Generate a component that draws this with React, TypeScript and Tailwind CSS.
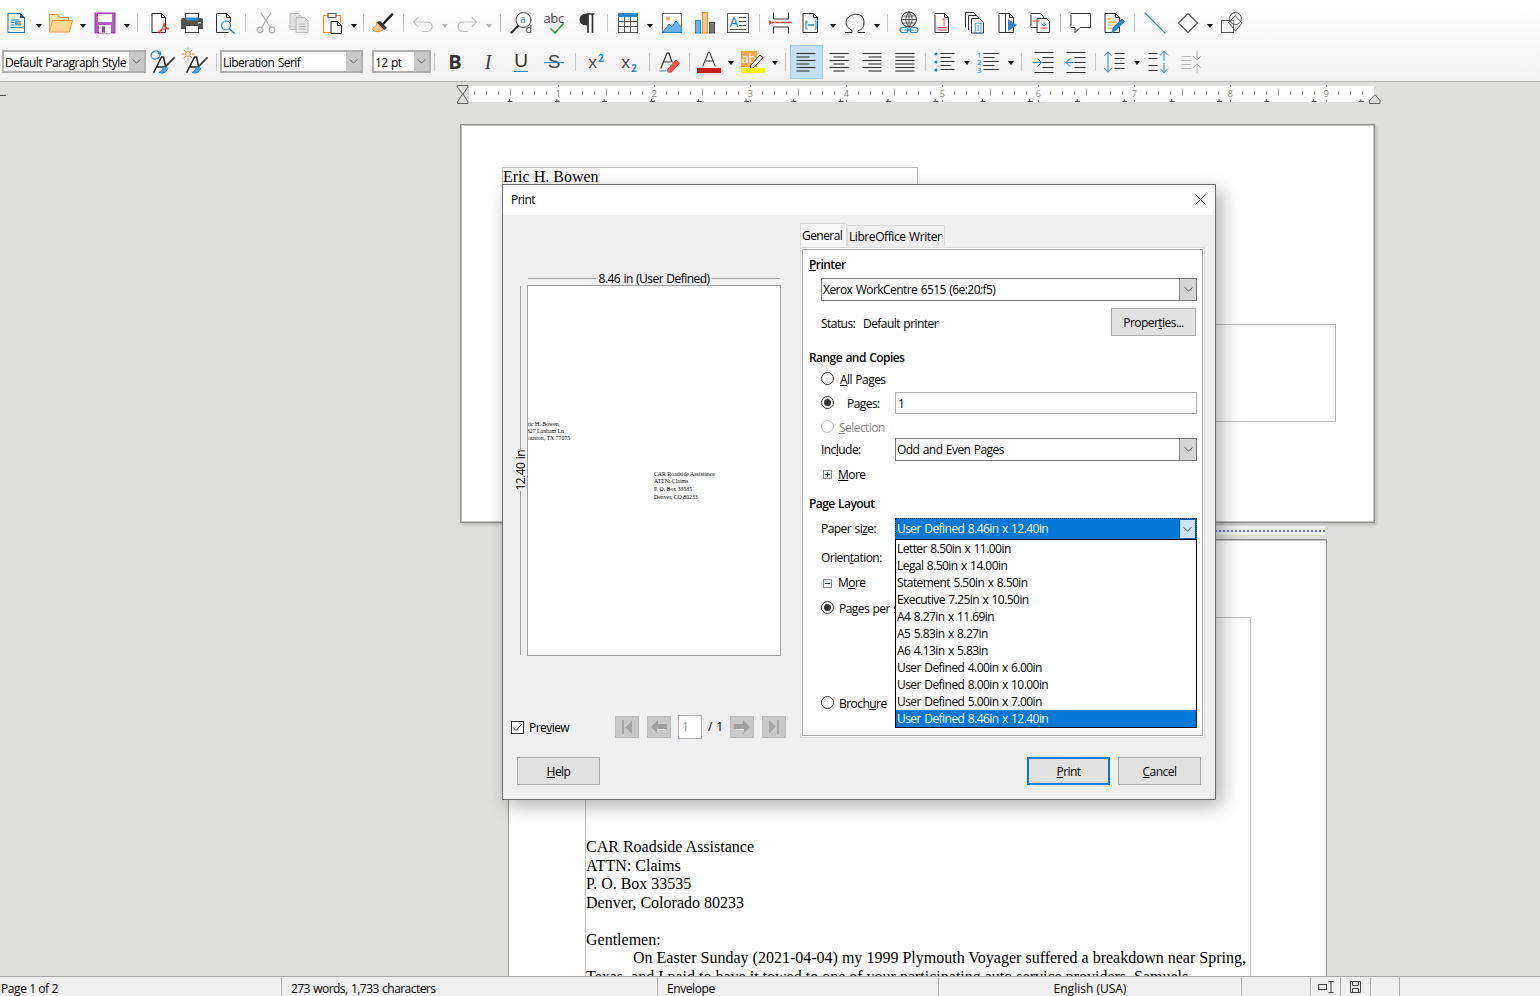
import React from "react";

const Ico = ({ children }: { children: React.ReactNode }) => (
  <svg viewBox="0 0 24 24" className="w-6 h-6 overflow-visible" fill="none" strokeWidth={1} stroke="#333" strokeLinecap="square">
    {children}
  </svg>
);
const I = ({ children, active, cls }: { children: React.ReactNode; active?: boolean; cls?: string }) => (
  <div className={"w-[33px] h-[34px] shrink-0 flex items-center justify-center " + (active ? "bg-[#c5dff5] border border-[#9ccaf0] " : "") + (cls || "")}>
    {children}
  </div>
);
const Caret = ({ dim }: { dim?: boolean }) => (
  <div className="w-[11px] shrink-0 flex items-center justify-center pt-[3px]">
    <div className={"w-0 h-0 border-l-[3.5px] border-r-[3.5px] border-t-[4px] border-l-transparent border-r-transparent " + (dim ? "border-t-[#b5b5b5]" : "border-t-[#111]")} />
  </div>
);
const Sep = ({ w }: { w: string }) => (
  <div className={w + " shrink-0 flex justify-center"}>
    <div className="w-px h-[18px] bg-[#c8c8c8]" />
  </div>
);
const Chev = ({ c = "#444" }: { c?: string }) => (
  <svg viewBox="0 0 10 6" className="w-[9px] h-[5px]" fill="none" stroke={c} strokeWidth={1}>
    <path d="M0.5 0.5 5 5 9.5 0.5" />
  </svg>
);

const DocShape = ({ s = "#333" }: { s?: string }) => <path d="M5.5 2.5h9l4 4v15h-13z M14.5 2.5v4h4" stroke={s} fill="#fff" />;

const StyleA = () => (
  <>
    <path d="M3 22L10.500 7h2l2 9M6.500 17H14" stroke="#222" strokeWidth={1.500} />
    <path d="M13 18L23 8" stroke="#333" strokeWidth={1.600} />
    <path d="M13 16.500q-1 4-5 6 4 1.500 6.500-.5l2-3z" fill="#4c9fe0" stroke="#2b86c9" />
  </>
);

const icons = {
  newdoc: (
    <Ico>
      <path d="M3.5 2.5h12l4 4v15h-16z" stroke="#1b72b8" fill="#fff" />
      <path d="M15 2l5 5h-5z" fill="#1b5c94" stroke="none" />
      <path d="M6 9h8M6 11.5h3M6 14h3M6 16.5h11" stroke="#1b72b8" />
      <rect x="10" y="10" width="6" height="4.5" fill="#5ea3dc" stroke="none" />
      <rect x="13" y="11" width="3" height="2" fill="#f29d48" stroke="none" />
    </Ico>
  ),
  open: (
    <Ico>
      <path d="M0.5 20.5v-17h8l2 3h9v3" stroke="#f7953b" fill="#fde3ac" />
      <path d="M0.5 20.5l3-11h20l-3 11z" stroke="#f7953b" fill="#fdd58e" />
    </Ico>
  ),
  save: (
    <Ico>
      <rect x="2" y="2" width="20" height="20" fill="#b05cbe" stroke="#9a3fa9" />
      <rect x="5" y="3" width="14" height="8" fill="#fff" stroke="none" />
      <rect x="6" y="14" width="12" height="8" fill="#fff" stroke="none" />
      <rect x="9" y="15.5" width="3" height="6" fill="#9a3fa9" stroke="none" />
    </Ico>
  ),
  pdf: (
    <Ico>
      <DocShape s="#222" />
      <path d="M13 22l3-6 1-4 1 4 4 2h-7l-4 3" stroke="#e8453c" strokeWidth={1.2} fill="none" />
    </Ico>
  ),
  print: (
    <Ico>
      <rect x="5.5" y="2.5" width="13" height="6" fill="#fff" stroke="#444" />
      <path d="M1 9q0-2 2-2h18q2 0 2 2v9h-22z" fill="#555" stroke="none" />
      <rect x="6" y="6.5" width="12" height="3" fill="#2f8fd6" stroke="none" />
      <rect x="5.5" y="14.5" width="13" height="7" fill="#fff" stroke="#444" />
      <rect x="18" y="11" width="3" height="1.5" fill="#fff" stroke="none" />
    </Ico>
  ),
  preview: (
    <Ico>
      <path d="M15 21.5H3.5v-19h10l4 4v4" stroke="#333" />
      <path d="M13.5 2.5v4h4" stroke="#333" />
      <circle cx="13" cy="14.5" r="4.5" stroke="#2b8ad0" fill="#fff" strokeWidth={1.2} />
      <path d="M16.5 18l4.5 4" stroke="#2b8ad0" strokeWidth={1.5} />
    </Ico>
  ),
  cut: (
    <Ico>
      <g stroke="#b3b3b3" strokeWidth={1.3}>
        <circle cx="6" cy="19" r="2.8" />
        <circle cx="18" cy="19" r="2.8" />
        <path d="M7.5 16.5L17 2M16.5 16.5L7 2" />
      </g>
    </Ico>
  ),
  copy: (
    <Ico>
      <g stroke="#b8b8b8">
        <path d="M3.5 2.5h8l3 3v13h-11z" fill="#ddd" />
        <path d="M9.5 6.5h8l3.5 3.5v11.5h-11.5z" fill="#e6e6e6" />
        <path d="M12 13h6M12 15.5h6M12 18h6" />
      </g>
    </Ico>
  ),
  paste: (
    <Ico>
      <path d="M8 4.5H3.5v17h7M16 4.5h4.500v6" stroke="#f0902f" strokeWidth={1.2} />
      <rect x="8" y="2.5" width="8" height="4" fill="#fff" stroke="#555" />
      <path d="M11.500 10.500h6l4 4v8h-10z M17.500 10.500v4h4" stroke="#222" fill="#fff" />
    </Ico>
  ),
  brush: (
    <Ico>
      <path d="M12 13L21 3.500" stroke="#222" strokeWidth={2.5} />
      <path d="M9 10l7 7-3 2-8-8z" fill="#333" stroke="none" />
      <path d="M6 12l6 7q-4 3-9 1-2-1-1-3 3 0 4-5z" fill="#fbc98d" stroke="#f0902f" />
    </Ico>
  ),
  undo: (
    <Ico>
      <path d="M7 6.500L2.500 11 7 15.500M2.500 11h13q5.500 0 5.500 4.500t-5.500 5h-4" stroke="#c4c4c4" strokeWidth={1.1} />
    </Ico>
  ),
  redo: (
    <Ico>
      <path d="M17 6.500l4.500 4.500-4.500 4.500M21.500 11h-13q-5.500 0-5.500 4.500t5.500 5h4" stroke="#c4c4c4" strokeWidth={1.1} />
    </Ico>
  ),
  find: (
    <Ico>
      <circle cx="13.500" cy="9" r="7.500" stroke="#444" fill="#fff" />
      <text x="10.300" y="12" fontSize="10" fill="#2b86c9" stroke="none" fontFamily="Open Sans">a</text>
      <path d="M8 15L1.500 21.500" stroke="#333" strokeWidth={2} />
      <text x="15.500" y="22" fontSize="11" fill="#333" stroke="none" fontFamily="Open Sans">d</text>
    </Ico>
  ),
  spell: (
    <Ico>
      <text x="0.500" y="12" fontSize="13" fill="#444" stroke="none" fontFamily="Open Sans" letterSpacing="-0.4">abc</text>
      <path d="M8 18l4 4 8-9" stroke="#35a24a" strokeWidth={1.6} />
    </Ico>
  ),
  pil: (
    <Ico>
      <path d="M11 3q-7 0-7 5.500t7 5.500z" fill="#333" stroke="#333" />
      <path d="M11.500 3h6M12 3v18M16.500 3v18" stroke="#333" strokeWidth={1.7} />
    </Ico>
  ),
  table: (
    <Ico>
      <rect x="2.500" y="2.500" width="19" height="19" fill="#fff" stroke="#555" />
      <rect x="2" y="2" width="20" height="4" fill="#2b86c9" stroke="none" />
      <path d="M2.500 10.500h19M2.500 15.500h19M8.500 6v15.500M14.500 6v15.500" stroke="#555" />
    </Ico>
  ),
  image: (
    <Ico>
      <rect x="2.500" y="2.500" width="19" height="19" fill="#fff" stroke="#666" />
      <circle cx="8" cy="7.500" r="2" fill="#f7a64b" stroke="none" />
      <path d="M3 21l6-8 3 3 4-6 5.500 6.500V21z" fill="#6cb2ea" stroke="#2b86c9" />
    </Ico>
  ),
  chart: (
    <Ico>
      <rect x="2.500" y="9.500" width="5" height="12.500" fill="#6cb2ea" stroke="#2b86c9" />
      <rect x="9.500" y="1.500" width="5" height="20.500" fill="#fbc98d" stroke="#f0902f" />
      <rect x="16.500" y="11.500" width="5" height="10.500" fill="#777" stroke="#555" />
    </Ico>
  ),
  textbox: (
    <Ico>
      <rect x="1.500" y="2.500" width="21" height="19" fill="#fff" stroke="#555" />
      <text x="3.500" y="16" fontSize="14" fill="#2b86c9" stroke="none" fontFamily="Open Sans">A</text>
      <path d="M13.500 6.500h6M13.500 10.500h6M13.500 14.500h6M4.500 18.500h15" stroke="#555" />
    </Ico>
  ),
  brk: (
    <Ico>
      <path d="M4.500 2v6h15V2M4.500 22v-6h15v6" stroke="#333" />
      <path d="M2 11.500h3M7 11.500h3M12 11.500h3M17 11.500h5" stroke="#e8453c" strokeWidth={1.3} />
      <path d="M0 9l4 2.500L0 14z" fill="#e8453c" stroke="none" />
    </Ico>
  ),
  field: (
    <Ico>
      <path d="M4.500 2.500h10l4 4v15h-14z M14.500 2.500v4h4" stroke="#333" fill="#fff" />
      <path d="M8 12v-2h-1v8h1M16 10h1v8h-1" stroke="#2b86c9" />
      <path d="M9.500 14h5" stroke="#2b86c9" strokeWidth={1.500} />
    </Ico>
  ),
  omega: (
    <Ico>
      <path d="M2.500 21.500h6.500v-2Q3 16.500 3 11t9-8q9 0 9 8t-6 8.500v2h6.500" stroke="#333" />
    </Ico>
  ),
  link: (
    <Ico>
      <circle cx="12" cy="8.500" r="7.500" stroke="#333" />
      <path d="M12 1v15M4.500 8.500h15M5.500 5h13M5.500 12h13M12 1q-7 7.500 0 15M12 1q7 7.500 0 15" stroke="#333" strokeWidth={0.8} />
      <rect x="3" y="16.500" width="8" height="5" rx="2.500" stroke="#2b86c9" fill="#fff" strokeWidth={1.2} />
      <rect x="13" y="16.500" width="8" height="5" rx="2.500" stroke="#2b86c9" fill="#fff" strokeWidth={1.2} />
      <path d="M8 19h8" stroke="#2b86c9" strokeWidth={1.2} />
    </Ico>
  ),
  foot: (
    <Ico>
      <DocShape s="#333" />
      <path d="M8 16.500h8M8 19h8" stroke="#e8453c" />
      <text x="11" y="14.500" fontSize="10" fill="#e8453c" stroke="none" fontFamily="Open Sans">1</text>
    </Ico>
  ),
  end: (
    <Ico>
      <path d="M2.500 16V1.500h8l2 2M5.500 18.500V4.500h8l3 3" stroke="#333" />
      <path d="M8.500 21.500v-14h8l4 4v10z" stroke="#333" fill="#fff" />
      <text x="11" y="20" fontSize="10" fill="#2b86c9" stroke="none" fontFamily="Open Sans">[i]</text>
    </Ico>
  ),
  mark: (
    <Ico>
      <path d="M3.500 2.500h10l4 4v15h-14z M13.500 2.500v4h4" stroke="#333" fill="#fff" />
      <path d="M9.500 2.500v19" stroke="#333" />
      <path d="M12 8l9 6-9 6z" fill="#2b86c9" stroke="none" />
    </Ico>
  ),
  xref: (
    <Ico>
      <path d="M2.500 2.500h9l3 3v11h-12z" stroke="#333" fill="#fff" />
      <path d="M8.500 7.500h9l3 3v11h-12z" stroke="#333" fill="#fff" />
      <path d="M4 10h6M12 17h6" stroke="#e8453c" />
      <path d="M15 11v4M13 13l2 2 2-2" stroke="#2b86c9" />
    </Ico>
  ),
  comment: (
    <Ico>
      <path d="M2.500 2.500h19v14H11l-5 5v-5H2.500z" stroke="#333" fill="#fff" />
    </Ico>
  ),
  track: (
    <Ico>
      <path d="M3.500 2.500h10l4 4v15h-14z M13.500 2.500v4h4" stroke="#333" fill="#fff" />
      <path d="M6 8h3M6 11h8M6 14h6M6 17h4" stroke="#f0902f" />
      <path d="M10 21l1-4 9-9 2.500 2.500-9 9z" fill="#2b86c9" stroke="#2b86c9" />
    </Ico>
  ),
  line: (
    <Ico>
      <path d="M2 2l20 20" stroke="#2b86c9" strokeWidth={1.2} />
    </Ico>
  ),
  diamond: (
    <Ico>
      <path d="M12 2.500L21.500 12 12 21.500 2.500 12z" stroke="#555" strokeWidth={1.1} />
    </Ico>
  ),
  shapes: (
    <Ico>
      <rect x="1.500" y="9.500" width="12" height="12" stroke="#555" />
      <circle cx="15.500" cy="7.500" r="6" stroke="#555" fill="#fff" fillOpacity="0.4" />
      <path d="M15.500 5l6.500 7-6.500 8-6.500-8z" stroke="#555" />
    </Ico>
  ),
  sUpd: (
    <Ico>
      <path d="M0 6a5 5 0 0 1 8-4M9 5a5 5 0 0 1-8 3" stroke="#2b86c9" strokeWidth={1.3} />
      <path d="M6.500 4l3-3 1 4z" fill="#2b86c9" stroke="none" />
      <StyleA />
    </Ico>
  ),
  sNew: (
    <Ico>
      <circle cx="4" cy="4" r="2.500" stroke="#f0902f" />
      <path d="M4 -2v2M4 8v2M-2 4h2M8 4h2M0 0l1.500 1.500M8 0L6.500 1.500M0 8l1.500-1.500M8 8L6.500 6.500" stroke="#f0902f" />
      <StyleA />
    </Ico>
  ),
  clear: (
    <Ico>
      <path d="M4 18L10 3h2l3 9M7 12h6" stroke="#333" strokeWidth={1.2} />
      <path d="M3 21h6" stroke="#2b86c9" />
      <path d="M11 19l8-9 3.500 3-8 9h-3z" fill="#ef5350" stroke="#d93a36" />
    </Ico>
  ),
  fcolor: (
    <Ico>
      <path d="M6 16L11.500 2h1L18 16M8 11h8" stroke="#333" />
      <rect x="0" y="18" width="24" height="5" fill="#c9211e" stroke="none" />
    </Ico>
  ),
  hl: (
    <Ico>
      <rect x="0" y="1" width="16" height="16" fill="#f7a64b" stroke="none" />
      <text x="0.500" y="13" fontSize="13" fill="#fff" stroke="none" fontFamily="Open Sans">ab</text>
      <path d="M10 15l9-10 3 2.500-9 10-3 1z" fill="#fff" stroke="#333" />
      <rect x="0" y="18" width="24" height="5" fill="#ffff00" stroke="none" />
    </Ico>
  ),
};

const lines = (xs: [number, number][]) => (
  <Ico>
    {xs.map((l, i) => (
      <path key={i} d={`M${l[0]} ${3.5 + i * 3.5}H${l[1]}`} stroke="#333" strokeWidth={1.1} />
    ))}
  </Ico>
);
const alignL = lines([[3, 21], [3, 15], [3, 21], [3, 15], [3, 21], [3, 15]]);
const alignC = lines([[3, 21], [7, 17], [3, 21], [7, 17], [3, 21], [7, 17]]);
const alignR = lines([[3, 21], [9, 21], [3, 21], [9, 21], [3, 21], [9, 21]]);
const alignJ = lines([[3, 21], [3, 21], [3, 21], [3, 21], [3, 21], [3, 21]]);

const bullets = (
  <Ico>
    <circle cx="3" cy="4" r="1.600" fill="#2b86c9" stroke="none" />
    <circle cx="3" cy="12" r="1.600" fill="#2b86c9" stroke="none" />
    <circle cx="3" cy="20" r="1.600" fill="#2b86c9" stroke="none" />
    <path d="M8 3.500h13M8 7.500h9M8 11.500h13M8 15.500h9M8 19.500h13" stroke="#333" />
  </Ico>
);
const numbering = (
  <Ico>
    <text x="0" y="7.500" fontSize="8" fill="#2b86c9" stroke="none" fontFamily="Open Sans">1</text>
    <text x="0" y="15" fontSize="8" fill="#2b86c9" stroke="none" fontFamily="Open Sans">2</text>
    <text x="0" y="22.500" fontSize="8" fill="#2b86c9" stroke="none" fontFamily="Open Sans">3</text>
    <path d="M7 3.500h14M7 7.500h10M7 11.500h14M7 15.500h10M7 19.500h14" stroke="#333" />
  </Ico>
);
const indent = (
  <Ico>
    <path d="M4 2.500h18M12 7.500h10M12 12.500h10M12 17.500h10M4 22.500h18" stroke="#333" />
    <path d="M2 12.500h8M7 9l3.500 3.500L7 16" stroke="#2b86c9" />
  </Ico>
);
const outdent = (
  <Ico>
    <path d="M3 2.500h18M11 7.500h10M11 12.500h10M11 17.500h10M3 22.500h18" stroke="#333" />
    <path d="M2 12.500h7M5.500 9L2 12.500 5.500 16" stroke="#2b86c9" />
  </Ico>
);
const spacing = (
  <Ico>
    <path d="M5 2v20M1.500 5.500L5 2l3.500 3.500M1.500 18.500L5 22l3.500-3.500" stroke="#2b86c9" />
    <path d="M12 3.500h9M12 8.500h9M12 13.500h9M12 18.500h9" stroke="#333" />
  </Ico>
);
const incr = (
  <Ico>
    <path d="M2 3.500h8M2 8.500h8M2 15.500h8M2 20.500h8" stroke="#333" />
    <path d="M17 1.500v9M13.500 5L17 1.500 20.500 5M17 13v9.500M13.500 19L17 22.500 20.500 19" stroke="#2b86c9" />
  </Ico>
);
const decr = (
  <Ico>
    <path d="M2 6.500h9M2 10.500h9M2 14.500h9M2 18.500h9" stroke="#b8b8b8" />
    <path d="M17 1v9M13.500 6.500L17 10l3.500-3.500M17 23v-9M13.500 17.500L17 14l3.500 3.500" stroke="#b8b8b8" />
  </Ico>
);

const Combo = ({ w, text, cls = "", textCls = "" }: { w: string; text: string; cls?: string; textCls?: string }) => (
  <div className={`${w} h-[23px] ${cls} shrink-0 flex border-2 border-[#b0b0b0] bg-white`}>
    <div className={"flex-1 min-w-0 pl-[1px] whitespace-nowrap overflow-hidden leading-[21px] " + textCls}>{text}</div>
    <div className="w-[15px] bg-[#c8c8c8] flex items-center justify-center">
      <Chev />
    </div>
  </div>
);

const DlgCombo = ({ text, w }: { text: string; w: string }) => (
  <div className={w + " h-[23px] shrink-0 flex border border-[#7a7a7a] bg-white"}>
    <div className="flex-1 pl-[1px] leading-[21px] whitespace-nowrap">{text}</div>
    <div className="w-[17px] bg-[#d4d4d4] border-l border-[#8a8a8a] flex items-center justify-center">
      <Chev />
    </div>
  </div>
);

const Radio = ({ on, dim }: { on?: boolean; dim?: boolean }) => (
  <div className={"w-[13px] h-[13px] rounded-full border bg-white shrink-0 flex items-center justify-center -mt-px " + (dim ? "border-[#c4c4c4]" : "border-[#333]")}>
    {on && <div className="w-[7px] h-[7px] rounded-full bg-[#333]" />}
  </div>
);

const Plus = ({ minus }: { minus?: boolean }) => (
  <div className="w-[9px] h-[9px] border border-[#8a8a8a] bg-white shrink-0 flex items-center justify-center relative">
    <div className="w-[5px] h-px bg-[#223a6b]" />
    {!minus && <div className="absolute w-px h-[5px] bg-[#223a6b]" />}
  </div>
);

const Btn = ({ children, cls = "border border-[#adadad]" }: { children: React.ReactNode; cls?: string }) => (
  <div className={"w-[83px] h-[28px] bg-[#e1e1e1] flex items-center justify-center shrink-0 pt-[2px] " + cls}>{children}</div>
);

const Nav = ({ children }: { children: React.ReactNode }) => (
  <div className="w-[24px] h-[22px] bg-[#c8c8c8] border border-[#bdbdbd] shrink-0 flex items-center justify-center">{children}</div>
);

const papers = [
  "Letter 8.50in x 11.00in",
  "Legal 8.50in x 14.00in",
  "Statement 5.50in x 8.50in",
  "Executive 7.25in x 10.50in",
  "A4 8.27in x 11.69in",
  "A5 5.83in x 8.27in",
  "A6 4.13in x 5.83in",
  "User Defined 4.00in x 6.00in",
  "User Defined 8.00in x 10.00in",
  "User Defined 5.00in x 7.00in",
  "User Defined 8.46in x 12.40in",
];

const Ruler = () => {
  const marks: React.ReactNode[] = [];
  for (let k = 0; k < 75; k++) {
    const x = 5 + k * 12;
    if (k % 8 === 7) continue;
    const major = k % 8 === 3;
    marks.push(<rect key={k} x={x} y={major ? 4 : 6.5} width="1" height={major ? 7 : 3} fill={major ? "#a0a0a0" : "#9a9a9a"} />);
  }
  const nums = [1, 2, 3, 4, 5, 6, 7, 8, 9];
  const tabs = Array.from({ length: 19 }, (_, i) => 40.5 + i * 47.3);
  return (
    <svg width="905" height="19" viewBox="0 0 905 19" className="shrink-0 overflow-visible">
      <rect x="0" y="1" width="905" height="16" fill="#fff" />
      {marks}
      {nums.map((n) => (
        <g key={n}>
          <rect x={89 + (n - 1) * 96} y="0" width="1" height="2" fill="#999" />
          <rect x={89 + (n - 1) * 96} y="15" width="1" height="2" fill="#999" />
          <text x={89 + (n - 1) * 96} y="11.500" textAnchor="middle" fontSize="9" fill="#8a8a8a" fontFamily="Open Sans">{n}</text>
        </g>
      ))}
      {tabs.map((x) => (
        <path key={x} d={`M${x} 14v3M${x - 2} 16.500h5`} stroke="#555" strokeWidth="1" fill="none" />
      ))}
    </svg>
  );
};

export default function App() {
  return (
    <div className="w-[1540px] h-[996px] relative overflow-hidden flex flex-col text-[12px] leading-[16px] tracking-[-0.55px] [word-spacing:0.8px] text-black bg-[#dfdfdd] font-['Open_Sans','Liberation_Sans',sans-serif]">
      {/* toolbars */}
      <div className="h-[82px] shrink-0 bg-linear-to-b from-white to-[#f2f2f2] border-b border-[#b4b4b4] flex flex-col">
        <div className="h-[42px] pt-[6px] flex pl-[0.5px]">
          <I>{icons.newdoc}</I>
          <Caret />
          <I>{icons.open}</I>
          <Caret />
          <I>{icons.save}</I>
          <Caret />
          <Sep w="w-[10px] pt-[8px]" />
          <I>{icons.pdf}</I>
          <I>{icons.print}</I>
          <I>{icons.preview}</I>
          <Sep w="w-[8px] pt-[8px]" />
          <I>{icons.cut}</I>
          <I>{icons.copy}</I>
          <I>{icons.paste}</I>
          <Caret />
          <Sep w="w-[7px] pt-[8px]" />
          <I>{icons.brush}</I>
          <Sep w="w-[7px] pt-[8px]" />
          <I>{icons.undo}</I>
          <Caret dim />
          <I>{icons.redo}</I>
          <Caret dim />
          <Sep w="w-[11px] pt-[8px]" />
          <I>{icons.find}</I>
          <I>{icons.spell}</I>
          <I>{icons.pil}</I>
          <Sep w="w-[6.5px] pt-[8px]" />
          <I>{icons.table}</I>
          <Caret />
          <I>{icons.image}</I>
          <I>{icons.chart}</I>
          <I>{icons.textbox}</I>
          <Sep w="w-[10px] pt-[8px]" />
          <I>{icons.brk}</I>
          <I cls="ml-[-3px]">{icons.field}</I>
          <Caret />
          <I>{icons.omega}</I>
          <Caret />
          <Sep w="w-[10px] pt-[8px]" />
          <I>{icons.link}</I>
          <I>{icons.foot}</I>
          <I>{icons.end}</I>
          <I>{icons.mark}</I>
          <I>{icons.xref}</I>
          <Sep w="w-[7px] pt-[8px]" />
          <I>{icons.comment}</I>
          <I>{icons.track}</I>
          <Sep w="w-[8px] pt-[8px]" />
          <I>{icons.line}</I>
          <I>{icons.diamond}</I>
          <Caret />
          <I>{icons.shapes}</I>
        </div>
        <div className="h-[39px] flex items-center">
          <Combo w="w-[144px]" cls="ml-[2px]" text="Default Paragraph Style" />
          <div className="w-[0.5px] shrink-0" />
          <I>{icons.sUpd}</I>
          <I>{icons.sNew}</I>
          <Sep w="w-[7.5px]" />
          <Combo w="w-[143px]" text="Liberation Serif" />
          <div className="w-[9px] shrink-0" />
          <Combo w="w-[59px]" text="12 pt" textCls="pl-[1px]" />
          <Sep w="w-[7.5px]" />
          <I><span className="text-[20px] font-bold text-[#333] tracking-normal font-['Open_Sans']">B</span></I>
          <I><span className="text-[20px] italic text-[#444] tracking-normal font-['Liberation_Serif']">I</span></I>
          <I><span className="text-[19px] text-[#333] tracking-normal border-b border-[#2b86c9] leading-[20px] font-['Liberation_Sans']">U</span></I>
          <I>
            <span className="text-[19px] text-[#444] tracking-normal relative leading-[20px] font-['Liberation_Sans']">
              S<span className="absolute left-[-4px] right-[-4px] top-[10px] h-px bg-[#2b86c9]" />
            </span>
          </I>
          <Sep w="w-[9px]" />
          <I>
            <span className="text-[17px] text-[#444] tracking-normal font-['Open_Sans'] flex items-start leading-[20px]">
              x<span className="text-[10px] text-[#2b86c9] font-bold leading-[12px] ml-[1px]">2</span>
            </span>
          </I>
          <I>
            <span className="text-[17px] text-[#444] tracking-normal font-['Open_Sans'] flex items-end leading-[20px]">
              x<span className="text-[10px] text-[#2b86c9] font-bold leading-[12px] ml-[1px] -mb-[2px]">2</span>
            </span>
          </I>
          <Sep w="w-[7px]" />
          <I>{icons.clear}</I>
          <Sep w="w-[7px]" />
          <I>{icons.fcolor}</I>
          <Caret />
          <I>{icons.hl}</I>
          <Caret />
          <Sep w="w-[9px]" />
          <I active>{alignL}</I>
          <I>{alignC}</I>
          <I>{alignR}</I>
          <I>{alignJ}</I>
          <Sep w="w-[7px]" />
          <I>{bullets}</I>
          <Caret />
          <I>{numbering}</I>
          <Caret />
          <Sep w="w-[10px]" />
          <I>{indent}</I>
          <I>{outdent}</I>
          <Sep w="w-[6px]" />
          <I>{spacing}</I>
          <Caret />
          <I>{incr}</I>
          <I>{decr}</I>
        </div>
      </div>

      {/* document area */}
      <div className="flex-1 min-h-0 flex flex-col relative">
        <div className="h-[19px] mt-[3px] flex shrink-0 relative">
          <div className="w-[6px] h-px bg-[#555] mt-[10px]" />
          <svg width="12" height="19" viewBox="0 0 12 19" className="ml-[451px] shrink-0" fill="#dfdfdd" stroke="#666">
            <path d="M0.500 0.500h10.500v1.500L6 9 11 17v1.500H0.500V17L5.500 9 0.500 2z" />
          </svg>
          <Ruler />
          <svg width="12" height="10" viewBox="0 0 12 10" className="mt-[9px] -ml-[5px] shrink-0" fill="#dfdfdd" stroke="#666">
            <path d="M0.500 9.500v-3L6 0.700 11 6.500v3z" />
          </svg>
        </div>

        <div className="ml-[460px] mt-[20px] w-[915px] h-[399px] shrink-0 bg-white border border-[#8f8f8f] shadow-[inset_0_0_0_1px_#c6c6c6,2px_2px_3px_#bdbdbd] flow-root">
          <div className="ml-[41px] mt-[42px] w-[416px] h-[60px] border border-[#bcbcbc] text-[16px] leading-[18px] tracking-normal [word-spacing:normal] font-['Liberation_Serif',serif]">
            Eric H. Bowen
          </div>
          <div className="ml-[440px] mt-[97px] w-[435px] h-[98px] border border-[#bcbcbc]" />
        </div>

        <div className="h-[16px] shrink-0 pt-[3px]">
          <div className="ml-[1000px] w-[325px] h-[9px] bg-[#eeeeee] flex items-center">
            <div className="w-full border-t-2 border-dotted border-[#6a6ad0]" />
          </div>
        </div>

        <div className="ml-[508px] w-[819px] flex-1 min-h-0 overflow-hidden bg-white border-x border-t border-[#8f8f8f] shadow-[inset_0_1px_0_0_#c6c6c6]">
          <div className="ml-[76px] mt-[77px] w-[666px] h-[400px] border-x border-t border-[#c4c4c4] pt-[220px] text-[16px] leading-[18.5px] tracking-normal [word-spacing:normal] font-['Liberation_Serif',serif]">
            <div>CAR Roadside Assistance</div>
            <div>ATTN: Claims</div>
            <div>P. O. Box 33535</div>
            <div>Denver, Colorado 80233</div>
            <div className="h-[18.5px]" />
            <div>Gentlemen:</div>
            <p className="w-[660px] indent-[47px] text-justify">
              On Easter Sunday (2021-04-04) my 1999 Plymouth Voyager suffered a breakdown near Spring, Texas, and I paid to have it towed to one of your participating auto service providers, Samuels
            </p>
          </div>
        </div>
      </div>

      {/* status bar */}
      <div className="h-[20px] shrink-0 bg-[#f0f0f0] border-t border-[#a8a8a8] flex items-center leading-[24px] tracking-[-0.42px] [word-spacing:normal]">
        <div className="w-[282px] pl-[1px] h-full border-r border-[#b0b0b0] whitespace-nowrap shrink-0">Page 1 of 2</div>
        <div className="w-[376px] pl-[9px] h-full border-r border-[#b0b0b0] whitespace-nowrap shrink-0 tracking-[-0.55px] [word-spacing:0.8px]">273 words, 1,733 characters</div>
        <div className="w-[281px] pl-[9px] h-full border-r border-[#b0b0b0] whitespace-nowrap shrink-0">Envelope</div>
        <div className="w-[303px] text-center h-full border-r border-[#b0b0b0] whitespace-nowrap shrink-0 tracking-normal">English (USA)</div>
        <div className="w-[69px] h-full border-r border-[#b0b0b0] shrink-0" />
        <div className="w-[30px] h-full border-r border-[#b0b0b0] shrink-0 flex items-center justify-center">
          <svg width="18" height="12" viewBox="0 0 18 12" fill="none" stroke="#444">
            <rect x="1.500" y="3.500" width="8" height="5" />
            <path d="M11.500 0.500h5M14 0.500v11M11.500 11.500h5" />
          </svg>
        </div>
        <div className="w-[30px] h-full border-r border-[#b0b0b0] shrink-0 flex items-center justify-center">
          <svg width="11" height="12" viewBox="0 0 11 12" fill="none" stroke="#444">
            <path d="M0.500 0.500h10v11h-10z M2.500 0.500v4h6v-4M2.500 11.500v-4h6v4" />
          </svg>
        </div>
        <div className="w-[29px] h-full border-r border-[#b0b0b0] shrink-0" />
      </div>

      {/* print dialog */}
      <div className="absolute left-[502px] top-[184px] w-[714px] h-[616px] bg-[#f0f0f0] border border-[#6e6e6e] shadow-[6px_6px_18px_rgba(0,0,0,0.32)] flex flex-col">
        <div className="h-[30px] shrink-0 bg-white flex items-center justify-between pl-[8px] pr-[9px]">
          <span>Print</span>
          <svg width="11" height="11" viewBox="0 0 11 11" stroke="#111" fill="none" className="-mt-[2px]">
            <path d="M0.500 0.500l10 10M10.500 0.500l-10 10" />
          </svg>
        </div>
        <div className="h-[542px] shrink-0 flex">
          {/* preview */}
          <div className="w-[297px] shrink-0 flex flex-col">
            <div className="ml-[25px] mt-[56px] w-[252px] h-[14px] flex items-center gap-[3px]">
              <div className="flex-1 h-px bg-[#a0a0a0]" />
              <span className="whitespace-nowrap pt-[2px]">8.46 in (User Defined)</span>
              <div className="flex-1 h-px bg-[#a0a0a0]" />
            </div>
            <div className="h-[371px] flex shrink-0">
              <div className="ml-[10px] w-[15px] flex flex-col items-center shrink-0 py-px">
                <div className="flex-1 w-px bg-[#a0a0a0]" />
                <span className="[writing-mode:vertical-rl] rotate-180 leading-[15px] py-[3px] whitespace-nowrap">12.40 in</span>
                <div className="flex-1 w-px bg-[#a0a0a0] max-h-[165px]" />
              </div>
              <div className="w-[254px] h-full -ml-px bg-white border border-[#a0a0a0] overflow-hidden pt-[135px] text-[5.8px] leading-[7.2px] tracking-normal [word-spacing:normal] font-['Liberation_Serif',serif] shrink-0">
                <div className="-ml-[4px] whitespace-nowrap">
                  <div>Eric H. Bowen</div>
                  <div>2327 Lanham Ln</div>
                  <div>Houston, TX 77075</div>
                </div>
                <div className="ml-[126px] mt-[28px] leading-[7.8px] whitespace-nowrap">
                  <div>CAR Roadside Assistance</div>
                  <div>ATTN: Claims</div>
                  <div>P. O. Box 33535</div>
                  <div>Denver, CO 80233</div>
                </div>
              </div>
            </div>
            <div className="mt-[60px] ml-[8px] h-[22px] flex items-center">
              <div className="w-[104px] flex items-center shrink-0">
                <div className="w-[13px] h-[13px] border border-[#333] bg-white flex items-center justify-center shrink-0">
                  <svg width="11" height="9" viewBox="0 0 11 9" fill="none" stroke="#222">
                    <path d="M1 4.500l3 3 6-6.500" />
                  </svg>
                </div>
                <span className="ml-[5px] pt-[2px]">Pre<u>v</u>iew</span>
              </div>
              <Nav>
                <svg width="14" height="16" viewBox="0 0 14 16" fill="#ededed"><rect x="2" y="1" width="2" height="14" fill="#a5a5a5" /><path d="M12 1v14L5 8z" fill="#a5a5a5" /><path d="M12 1L5 8l-.5-.5z" /></svg>
              </Nav>
              <div className="w-[8px] shrink-0" />
              <Nav>
                <svg width="18" height="14" viewBox="0 0 18 14"><path d="M8 0L1 7l7 7v-4h9V4H8z" fill="#a0a0a0" /><path d="M8 14v-4h9l-2-1H7z" fill="#eee" /></svg>
              </Nav>
              <div className="ml-[7px] w-[24px] h-[24px] border border-[#b0b0bc] bg-white shrink-0 text-[#9a9a9a] pl-[3px] leading-[22px]">1</div>
              <span className="ml-[6px] w-[22px] shrink-0 tracking-normal">/ 1</span>
              <Nav>
                <svg width="18" height="14" viewBox="0 0 18 14"><path d="M10 0l7 7-7 7v-4H1V4h9z" fill="#a0a0a0" /><path d="M10 14v-4H1l2-1h8z" fill="#eee" /></svg>
              </Nav>
              <div className="w-[8px] shrink-0" />
              <Nav>
                <svg width="14" height="16" viewBox="0 0 14 16"><rect x="10" y="1" width="2" height="14" fill="#a5a5a5" /><path d="M2 1v14l7-7z" fill="#a5a5a5" /><path d="M2 15l7-7 .5.500z" fill="#eee" /></svg>
              </Nav>
            </div>
          </div>

          {/* options */}
          <div className="w-[405px] shrink-0 flex flex-col">
            <div className="mt-[8px] h-[24px] shrink-0 flex items-end">
              <div className="w-[47px] h-[25px] bg-[#f6f6f6] border-x border-t border-[#dcdcdc] pl-[1px] leading-[24px] -mb-px whitespace-nowrap">General</div>
              <div className="w-[98px] h-[21px] bg-[#f0f0f0] border-x border-t border-[#dcdcdc] pl-[1px] leading-[22px] mb-px whitespace-nowrap tracking-[-0.42px]">LibreOffice Writer</div>
            </div>
            <div className="h-[491px] shrink-0 border border-[#dedede] bg-white p-px">
              <div className="h-full border border-[#a8a8a8] flex flex-col">
                <div className="mt-[7px] ml-[6px] font-semibold h-[16px]"><u>P</u>rinter</div>
                <div className="mt-[5px] ml-[18px]"><DlgCombo w="w-[376px]" text="Xerox WorkCentre 6515 (6e:20:f5)" /></div>
                <div className="mt-[7px] ml-[18px] w-[375px] h-[28px] flex items-center justify-between">
                  <div className="flex pt-[3px]">
                    <span className="w-[42px]">Status:</span>
                    <span>Default printer</span>
                  </div>
                  <div className="w-[85px] h-[28px] bg-[#e1e1e1] border border-[#adadad] flex items-center justify-center pt-[2px]">Proper<u>t</u>ies...</div>
                </div>
                <div className="mt-[14px] ml-[6px] font-semibold h-[16px]">Range and Copies</div>
                <div className="mt-[5px] ml-[18px] h-[16px] flex items-center"><Radio /><span className="ml-[6px] pt-[2px]"><u>A</u>ll Pages</span></div>
                <div className="mt-[5px] ml-[18px] h-[22px] flex items-center">
                  <Radio on />
                  <span className="ml-[13px] w-[48px] pt-[2px]">Pa<u>g</u>es:</span>
                  <div className="w-[302px] h-[22px] bg-white border border-[#b0b0b0] pl-[2px] leading-[21px]">1</div>
                </div>
                <div className="mt-[5px] ml-[18px] h-[16px] flex items-center text-[#8a8a8a]"><Radio dim /><span className="ml-[5px] pt-[2px]"><u>S</u>election</span></div>
                <div className="mt-[3px] ml-[18px] h-[23px] flex items-center">
                  <span className="w-[74px]">Inc<u>l</u>ude:</span>
                  <DlgCombo w="w-[302px]" text="Odd and Even Pages" />
                </div>
                <div className="mt-[6px] ml-[20px] h-[14px] flex items-center"><Plus /><span className="ml-[6px] pt-[2px]"><u>M</u>ore</span></div>
                <div className="mt-[15px] ml-[6px] font-semibold h-[16px]">Page Layout</div>
                <div className="mt-[6px] ml-[18px] h-[22px] flex items-center relative">
                  <span className="w-[74px]">Paper si<u>z</u>e:</span>
                  <div className="w-[302px] h-[22px] flex bg-[#0078d7] border border-dotted border-[#333]">
                    <div className="flex-1 pl-[1px] text-white leading-[20px]">User Defined 8.46in x 12.40in</div>
                    <div className="w-[17px] bg-[#cce4f7] border border-[#005499] flex items-center justify-center"><Chev c="#333" /></div>
                  </div>
                  <div className="absolute z-10 left-[74px] top-[21px] w-[302px] h-[189px] bg-white border border-black">
                    {papers.map((p, i) => (
                      <div key={p} className={"h-[17px] pl-[1px] leading-[17px] whitespace-nowrap " + (i === 10 ? "bg-[#0078d7] text-white" : "")}>{p}</div>
                    ))}
                  </div>
                </div>
                <div className="mt-[10px] ml-[18px] h-[16px] whitespace-nowrap">Orien<u>t</u>ation:</div>
                <div className="mt-[9px] ml-[20px] h-[16px] flex items-center"><Plus minus /><span className="ml-[6px]">M<u>o</u>re</span></div>
                <div className="mt-[9px] ml-[18px] h-[16px] flex items-center whitespace-nowrap"><Radio on /><span className="ml-[5px] pt-[2px]">Pages per sheet</span></div>
                <div className="mt-[79px] ml-[18px] h-[16px] flex items-center"><Radio /><span className="ml-[5px] pt-[2px]">Broch<u>u</u>re</span></div>
              </div>
            </div>
          </div>
        </div>
        <div className="h-[28px] shrink-0 flex pl-[14px] pr-[14px]">
          <Btn><span><u>H</u>elp</span></Btn>
          <div className="flex-1" />
          <Btn cls="border-2 border-[#0078d7]"><span><u>P</u>rint</span></Btn>
          <div className="w-[8px] shrink-0" />
          <Btn><span><u>C</u>ancel</span></Btn>
        </div>
      </div>
    </div>
  );
}
